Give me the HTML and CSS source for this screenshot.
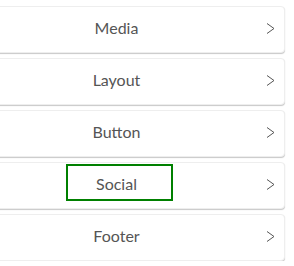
FILE: index.html
```html
<!DOCTYPE html>
<html>
<head>
<meta charset="utf-8">
<link rel="stylesheet" href="styles.css">
</head>
<body>
<ul class="menu">
  <li class="item"><span class="label">Media</span><svg class="chev" width="9" height="11" viewBox="0 0 9 11"><path d="M1 0.5 L8 5.5 L1 10.5" fill="none" stroke="#555" stroke-width="1"/></svg></li>
  <li class="item"><span class="label">Layout</span><svg class="chev" width="9" height="11" viewBox="0 0 9 11"><path d="M1 0.5 L8 5.5 L1 10.5" fill="none" stroke="#555" stroke-width="1"/></svg></li>
  <li class="item"><span class="label">Button</span><svg class="chev" width="9" height="11" viewBox="0 0 9 11"><path d="M1 0.5 L8 5.5 L1 10.5" fill="none" stroke="#555" stroke-width="1"/></svg></li>
  <li class="item"><span class="label">Social</span><svg class="chev" width="9" height="11" viewBox="0 0 9 11"><path d="M1 0.5 L8 5.5 L1 10.5" fill="none" stroke="#555" stroke-width="1"/></svg><span class="focus"></span></li>
  <li class="item"><span class="label">Footer</span><svg class="chev" width="9" height="11" viewBox="0 0 9 11"><path d="M1 0.5 L8 5.5 L1 10.5" fill="none" stroke="#555" stroke-width="1"/></svg></li>
</ul>
</body>
</html>
```
FILE: styles.css
```css
html, body {
  margin: 0;
  padding: 0;
  background: #fff;
}
body {
  font-family: Lato, "Liberation Sans", sans-serif;
}
.menu {
  list-style: none;
  margin: 0;
  padding: 6px 0 0 0;
  display: flex;
  flex-direction: column;
  gap: 5px;
  width: 310px;
  margin-left: -25px;
}
.item {
  position: relative;
  box-sizing: border-box;
  height: 47px;
  display: flex;
  align-items: center;
  background: #fff;
  border: 1px solid #eeeeee;
  border-radius: 4px;
  box-shadow: 0 1px 1px rgba(0, 0, 0, 0.22);
  padding-right: 9px;
}
.label {
  flex: 1;
  text-align: center;
  font-size: 16px;
  line-height: 20px;
  color: #555555;
  padding-right: 9px;
  margin-top: -3px;
}
.chev {
  display: block;
  margin-top: -3px;
}
.focus {
  position: absolute;
  left: 90px;
  top: 1px;
  width: 107px;
  height: 37px;
  box-sizing: border-box;
  border: 2px solid #008000;
}
```
